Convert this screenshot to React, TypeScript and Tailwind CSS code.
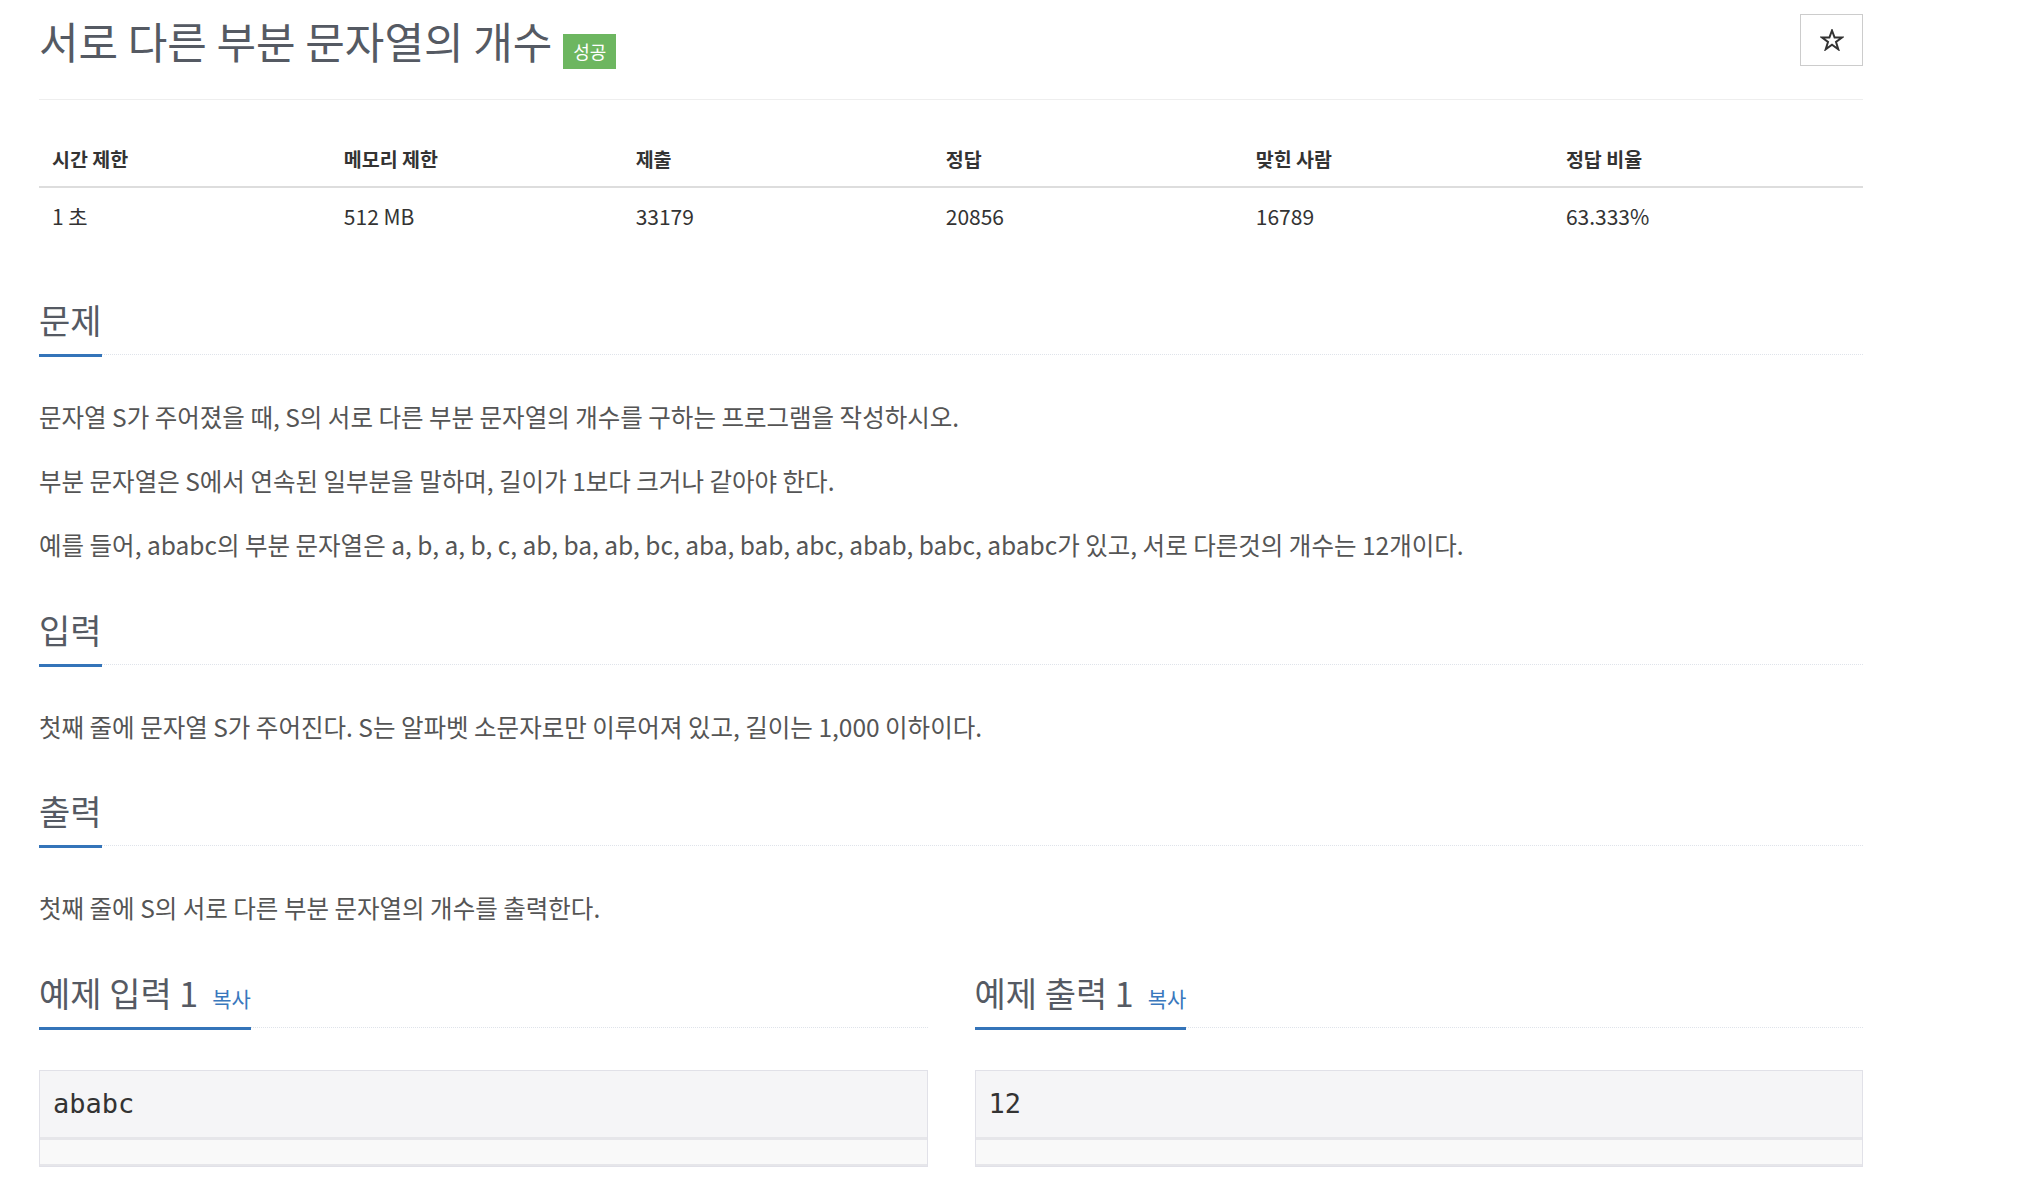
import React from 'react'

interface HeadlineProps {
    title: string
    copy?: boolean
}

const Headline = ({ title, copy }: HeadlineProps) => {
    return (
        <div className="flex border-b border-dotted border-[#dfe3ea]">
            <h2 className="mb-[-3px] flex h-[57px] items-baseline border-b-[3px] border-[#3474b9] pb-[14px] text-[34px] leading-[40px] font-normal text-[#555a63]">
                {title}
                {copy && <span className="ml-[14px] text-[21px] leading-none text-[#3a78bd]">복사</span>}
            </h2>
        </div>
    )
}

const SampleBox = ({ value }: { value: string }) => {
    return (
        <div className="mt-[42px] border border-[#e1e1e8]">
            <div className="flex h-[66px] items-center bg-[#f5f5f7] px-[13px] font-['DejaVu_Sans_Mono',monospace] text-[27px] text-[#333]">
                {value}
            </div>
            <div className="h-[29px] border-t-[3px] border-b-[2px] border-[#e6e6ea] bg-[#f9f9f9]" />
        </div>
    )
}

const stats = [
    { head: '시간 제한', value: '1 초', w: 'w-[16%]' },
    { head: '메모리 제한', value: '512 MB', w: 'w-[16%]' },
    { head: '제출', value: '33179', w: 'w-[17%]' },
    { head: '정답', value: '20856', w: 'w-[17%]' },
    { head: '맞힌 사람', value: '16789', w: 'w-[17%]' },
    { head: '정답 비율', value: '63.333%', w: 'w-[17%]' },
]

export default function App() {
    return (
        <div className="min-h-screen bg-white font-['Noto_Sans_CJK_KR','Noto_Sans',sans-serif]">
            <div className="ml-[39px] w-[1824px]">

                {/* header */}
                <div className="flex h-[100px] items-start justify-between border-b border-[#eeeeee]">
                    <div className="flex items-start">
                        <h1 className="mt-[16px] text-[43px] leading-[48px] font-normal text-[#555a63]">서로 다른 부분 문자열의 개수</h1>
                        <span className="ml-[11px] mt-[34px] flex h-[35px] w-[53px] items-center justify-center bg-[#6db660] text-[18px] text-white">성공</span>
                    </div>
                    <button className="mt-[14px] flex h-[52px] w-[63px] items-center justify-center border border-[#cccccc] bg-white">
                        <svg width="24" height="22" viewBox="0 0 24 22">
                            <polygon points="12,1.5 14.6,8.6 22,8.6 16,13 18.3,20.3 12,15.8 5.7,20.3 8,13 2,8.6 9.4,8.6" fill="none" stroke="#333" strokeWidth="2" strokeLinejoin="miter" />
                        </svg>
                    </button>
                </div>

                {/* stats table */}
                <table className="mt-[31px] w-full table-fixed border-collapse">
                    <thead>
                        <tr>
                            {stats.map((s) => (
                                <th key={s.head} className={`${s.w} h-[56px] border-b-2 border-[#dddddd] px-[13px] text-left text-[19.5px] font-bold text-[#333]`}>{s.head}</th>
                            ))}
                        </tr>
                    </thead>
                    <tbody>
                        <tr>
                            {stats.map((s) => (
                                <td key={s.head} className="h-[58px] px-[13px] text-[21px] text-[#333]">{s.value}</td>
                            ))}
                        </tr>
                    </tbody>
                </table>

                {/* 문제 */}
                <section className="mt-[55px]">
                    <Headline title="문제" />
                    <div className="mt-[46px] flex flex-col gap-[32px] text-[24.5px] leading-[32px] text-[#555]">
                        <p>문자열 S가 주어졌을 때, S의 서로 다른 부분 문자열의 개수를 구하는 프로그램을 작성하시오.</p>
                        <p>부분 문자열은 S에서 연속된 일부분을 말하며, 길이가 1보다 크거나 같아야 한다.</p>
                        <p>예를 들어, ababc의 부분 문자열은 a, b, a, b, c, ab, ba, ab, bc, aba, bab, abc, abab, babc, ababc가 있고, 서로 다른것의 개수는 12개이다.</p>
                    </div>
                </section>

                {/* 입력 */}
                <section className="mt-[49px]">
                    <Headline title="입력" />
                    <p className="mt-[46px] text-[24.5px] leading-[32px] text-[#555]">첫째 줄에 문자열 S가 주어진다. S는 알파벳 소문자로만 이루어져 있고, 길이는 1,000 이하이다.</p>
                </section>

                {/* 출력 */}
                <section className="mt-[48px]">
                    <Headline title="출력" />
                    <p className="mt-[46px] text-[24.5px] leading-[32px] text-[#555]">첫째 줄에 S의 서로 다른 부분 문자열의 개수를 출력한다.</p>
                </section>

                {/* 예제 */}
                <div className="mt-[49px] grid grid-cols-2 gap-x-[47px] pb-[36px]">
                    <section>
                        <Headline title="예제 입력 1" copy />
                        <SampleBox value="ababc" />
                    </section>
                    <section>
                        <Headline title="예제 출력 1" copy />
                        <SampleBox value="12" />
                    </section>
                </div>
            </div>
        </div>
    )
}
